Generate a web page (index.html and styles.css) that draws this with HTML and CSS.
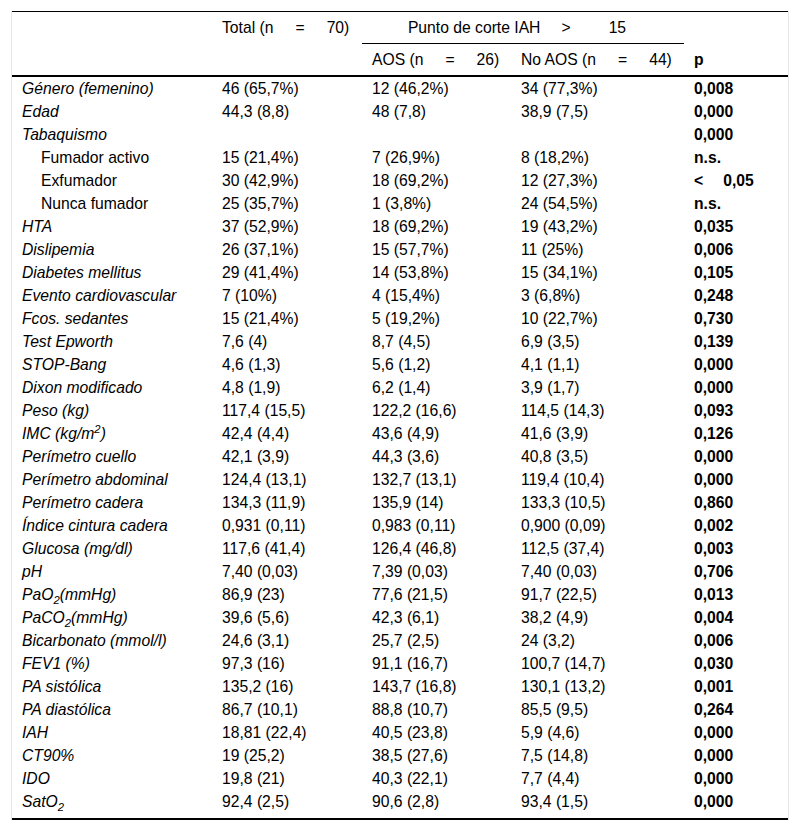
FILE: index.html
```html
<!DOCTYPE html>
<html lang="es">
<head>
<meta charset="utf-8">
<title>Tabla</title>
<link rel="stylesheet" href="styles.css">
</head>
<body>
<div class="wrap">
<table class="tbl">
<colgroup>
<col class="c1"><col class="c2"><col class="c3"><col class="c4"><col class="c5">
</colgroup>
<thead>
<tr class="h1">
<th></th>
<th>Total (n<span class="g"></span>=<span class="g"></span>70)</th>
<th colspan="2" class="span">Punto de corte IAH<span class="g1"></span>&gt;<span class="g2"></span>15</th>
<th></th>
</tr>
<tr class="h2">
<th></th>
<th></th>
<th>AOS (n<span class="g"></span>=<span class="g"></span>26)</th>
<th>No AOS (n<span class="g"></span>=<span class="g"></span>44)</th>
<th class="b">p</th>
</tr>
</thead>
<tbody>
<tr><td class="l">Género (femenino)</td><td>46 (65,7%)</td><td>12 (46,2%)</td><td>34 (77,3%)</td><td class="b">0,008</td></tr>
<tr><td class="l">Edad</td><td>44,3 (8,8)</td><td>48 (7,8)</td><td>38,9 (7,5)</td><td class="b">0,000</td></tr>
<tr><td class="l">Tabaquismo</td><td></td><td></td><td></td><td class="b">0,000</td></tr>
<tr><td class="sub">Fumador activo</td><td>15 (21,4%)</td><td>7 (26,9%)</td><td>8 (18,2%)</td><td class="b">n.s.</td></tr>
<tr><td class="sub">Exfumador</td><td>30 (42,9%)</td><td>18 (69,2%)</td><td>12 (27,3%)</td><td class="b">&lt;<span class="g3"></span>0,05</td></tr>
<tr><td class="sub">Nunca fumador</td><td>25 (35,7%)</td><td>1 (3,8%)</td><td>24 (54,5%)</td><td class="b">n.s.</td></tr>
<tr><td class="l">HTA</td><td>37 (52,9%)</td><td>18 (69,2%)</td><td>19 (43,2%)</td><td class="b">0,035</td></tr>
<tr><td class="l">Dislipemia</td><td>26 (37,1%)</td><td>15 (57,7%)</td><td>11 (25%)</td><td class="b">0,006</td></tr>
<tr><td class="l">Diabetes mellitus</td><td>29 (41,4%)</td><td>14 (53,8%)</td><td>15 (34,1%)</td><td class="b">0,105</td></tr>
<tr><td class="l">Evento cardiovascular</td><td>7 (10%)</td><td>4 (15,4%)</td><td>3 (6,8%)</td><td class="b">0,248</td></tr>
<tr><td class="l">Fcos. sedantes</td><td>15 (21,4%)</td><td>5 (19,2%)</td><td>10 (22,7%)</td><td class="b">0,730</td></tr>
<tr><td class="l">Test Epworth</td><td>7,6 (4)</td><td>8,7 (4,5)</td><td>6,9 (3,5)</td><td class="b">0,139</td></tr>
<tr><td class="l">STOP-Bang</td><td>4,6 (1,3)</td><td>5,6 (1,2)</td><td>4,1 (1,1)</td><td class="b">0,000</td></tr>
<tr><td class="l">Dixon modificado</td><td>4,8 (1,9)</td><td>6,2 (1,4)</td><td>3,9 (1,7)</td><td class="b">0,000</td></tr>
<tr><td class="l">Peso (kg)</td><td>117,4 (15,5)</td><td>122,2 (16,6)</td><td>114,5 (14,3)</td><td class="b">0,093</td></tr>
<tr><td class="l">IMC (kg/m<sup>2</sup>)</td><td>42,4 (4,4)</td><td>43,6 (4,9)</td><td>41,6 (3,9)</td><td class="b">0,126</td></tr>
<tr><td class="l">Perímetro cuello</td><td>42,1 (3,9)</td><td>44,3 (3,6)</td><td>40,8 (3,5)</td><td class="b">0,000</td></tr>
<tr><td class="l">Perímetro abdominal</td><td>124,4 (13,1)</td><td>132,7 (13,1)</td><td>119,4 (10,4)</td><td class="b">0,000</td></tr>
<tr><td class="l">Perímetro cadera</td><td>134,3 (11,9)</td><td>135,9 (14)</td><td>133,3 (10,5)</td><td class="b">0,860</td></tr>
<tr><td class="l">Índice cintura cadera</td><td>0,931 (0,11)</td><td>0,983 (0,11)</td><td>0,900 (0,09)</td><td class="b">0,002</td></tr>
<tr><td class="l">Glucosa (mg/dl)</td><td>117,6 (41,4)</td><td>126,4 (46,8)</td><td>112,5 (37,4)</td><td class="b">0,003</td></tr>
<tr><td class="l">pH</td><td>7,40 (0,03)</td><td>7,39 (0,03)</td><td>7,40 (0,03)</td><td class="b">0,706</td></tr>
<tr><td class="l">PaO<sub>2</sub>(mmHg)</td><td>86,9 (23)</td><td>77,6 (21,5)</td><td>91,7 (22,5)</td><td class="b">0,013</td></tr>
<tr><td class="l">PaCO<sub>2</sub>(mmHg)</td><td>39,6 (5,6)</td><td>42,3 (6,1)</td><td>38,2 (4,9)</td><td class="b">0,004</td></tr>
<tr><td class="l">Bicarbonato (mmol/l)</td><td>24,6 (3,1)</td><td>25,7 (2,5)</td><td>24 (3,2)</td><td class="b">0,006</td></tr>
<tr><td class="l">FEV1 (%)</td><td>97,3 (16)</td><td>91,1 (16,7)</td><td>100,7 (14,7)</td><td class="b">0,030</td></tr>
<tr><td class="l">PA sistólica</td><td>135,2 (16)</td><td>143,7 (16,8)</td><td>130,1 (13,2)</td><td class="b">0,001</td></tr>
<tr><td class="l">PA diastólica</td><td>86,7 (10,1)</td><td>88,8 (10,7)</td><td>85,5 (9,5)</td><td class="b">0,264</td></tr>
<tr><td class="l">IAH</td><td>18,81 (22,4)</td><td>40,5 (23,8)</td><td>5,9 (4,6)</td><td class="b">0,000</td></tr>
<tr><td class="l">CT90%</td><td>19 (25,2)</td><td>38,5 (27,6)</td><td>7,5 (14,8)</td><td class="b">0,000</td></tr>
<tr><td class="l">IDO</td><td>19,8 (21)</td><td>40,3 (22,1)</td><td>7,7 (4,4)</td><td class="b">0,000</td></tr>
<tr class="last"><td class="l">SatO<sub>2</sub></td><td>92,4 (2,5)</td><td>90,6 (2,8)</td><td>93,4 (1,5)</td><td class="b">0,000</td></tr>
</tbody>
</table>
</div>
</body>
</html>
```

FILE: styles.css
```css
html, body {
  margin: 0;
  padding: 0;
  background: #fff;
}

body {
  font-family: "Liberation Sans", Arial, sans-serif;
  font-size: 15.7px;
  color: #000;
}

.wrap {
  margin: 11px 0 0 11px;
  width: 776px;
  border-left: 1px solid #e6e6e6;
  border-right: 1px solid #e6e6e6;
}

.tbl {
  width: 776px;
  border-collapse: separate;
  border-spacing: 0;
  table-layout: fixed;
  border-top: 1px solid #000;
  border-bottom: 2px solid #000;
}

.c1 { width: 200px; }
.c2 { width: 150px; }
.c3 { width: 149px; }
.c4 { width: 173px; }
.c5 { width: 104px; }

.tbl th,
.tbl td {
  padding: 0 0 0 10px;
  text-align: left;
  white-space: nowrap;
  vertical-align: middle;
}

.tbl th {
  font-weight: normal;
  line-height: 18px;
}

.tbl .h1 {
  height: 32px;
}

.tbl .h1 .span {
  text-align: center;
  padding-left: 0;
  padding-right: 12px;
  border-bottom: 1px solid #000;
}

.tbl .h2 {
  height: 33px;
}

.tbl .h2 th {
  border-bottom: 2px solid #000;
}

.tbl tbody tr {
  height: 23px;
}

.tbl td {
  line-height: 23px;
}

.tbl .last td {
  padding-bottom: 5px;
}

.g {
  display: inline-block;
  width: 22px;
}

.g1 {
  display: inline-block;
  width: 21px;
}

.g2 {
  display: inline-block;
  width: 38px;
}

.g3 {
  display: inline-block;
  width: 20px;
}

.tbl .l {
  font-style: italic;
}

.tbl .sub {
  padding-left: 29px;
}

.tbl .b {
  font-weight: bold;
}

sub, sup {
  line-height: 0;
  font-size: 0.72em;
}
```
